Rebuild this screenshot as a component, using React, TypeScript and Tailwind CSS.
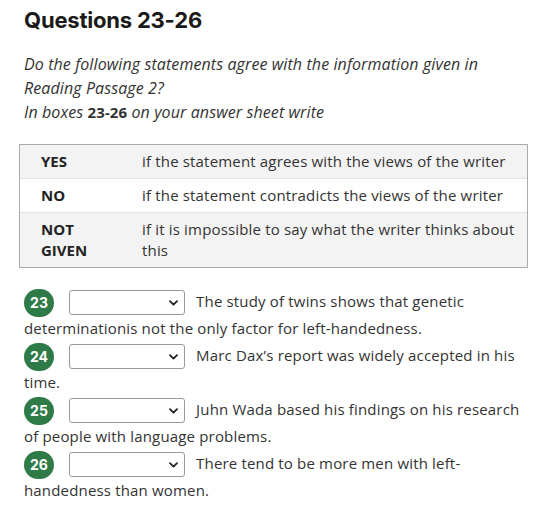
import React from "react";

const rows = [
  { key: "YES", text: "if the statement agrees with the views of the writer", shade: true },
  { key: "NO", text: "if the statement contradicts the views of the writer", shade: false },
  { key: "NOT GIVEN", text: "if it is impossible to say what the writer thinks about this", shade: true },
];

const questions = [
  { n: 23, text: "The study of twins shows that genetic determinationis not the only factor for left-handedness." },
  { n: 24, text: "Marc Dax’s report was widely accepted in his time." },
  { n: 25, text: "Juhn Wada based his findings on his research of people with language problems." },
  { n: 26, text: "There tend to be more men with left-handedness than women." },
];

const Chevron = () => (
  <svg
    className="pointer-events-none absolute right-[7px] top-1/2 -translate-y-1/2"
    width="9"
    height="6"
    viewBox="0 0 9 6"
    fill="none"
  >
    <path d="M1 1.2 4.5 4.6 8 1.2" stroke="#222" strokeWidth="1.8" strokeLinecap="round" strokeLinejoin="round" />
  </svg>
);

const App = () => {
  return (
    <div className="w-[540px] min-h-[511px] bg-white text-[#333] font-['Open_Sans',sans-serif] text-[15px] tracking-[0.17px]">
      {/* Title */}
      <h1 className="pl-[24px] pt-[7px] text-[22px] leading-[26px] font-bold text-[#1a1a1a] font-['Inter',sans-serif] tracking-[-0.2px]">
        Questions 23-26
      </h1>

      {/* Instructions */}
      <div className="pl-[24px] pt-[19px] italic text-[16px] tracking-[0.1px] leading-[24px]">
        <p>Do the following statements agree with the information given in</p>
        <p>Reading Passage 2?</p>
        <p>
          In boxes <span className="font-bold not-italic text-[15px]">23-26</span> on your answer sheet write
        </p>
      </div>

      {/* Key table */}
      <div className="ml-[19px] mt-[20px] w-[509px] border border-[#aaa]">
        {rows.map((r, i) => (
          <div
            key={r.key}
            className={`flex py-[6px] leading-[21px] ${r.shade ? "bg-[#f3f3f3]" : "bg-white"} ${i > 0 ? "border-t border-[#e3e3e3]" : ""}`}
          >
            <div className="w-[122px] shrink-0 pl-[21px] pr-[24px] font-bold text-[#222] tracking-normal">{r.key}</div>
            <div className="pr-[10px]">{r.text}</div>
          </div>
        ))}
      </div>

      {/* Questions */}
      <div className="pl-[24px] pr-[16px] pt-[20px] leading-[27px]">
        {questions.map((q) => (
          <p key={q.n}>
            <span className="-my-[2px] inline-flex h-[28px] w-[30px] items-center justify-center rounded-full bg-[#2f7b47] align-middle text-[14px] font-bold text-white font-['Inter',sans-serif] tracking-normal">
              {q.n}
            </span>
            <span className="relative -my-[2px] ml-[15px] mr-[7px] inline-block align-middle">
              <select className="block h-[25px] w-[116px] appearance-none rounded-[3px] border border-[#9a9a9a] bg-white" defaultValue="">
                <option value=""></option>
                <option value="YES">YES</option>
                <option value="NO">NO</option>
                <option value="NOT GIVEN">NOT GIVEN</option>
              </select>
              <Chevron />
            </span>{" "}
            {q.text}
          </p>
        ))}
      </div>
    </div>
  );
};

export default App;
